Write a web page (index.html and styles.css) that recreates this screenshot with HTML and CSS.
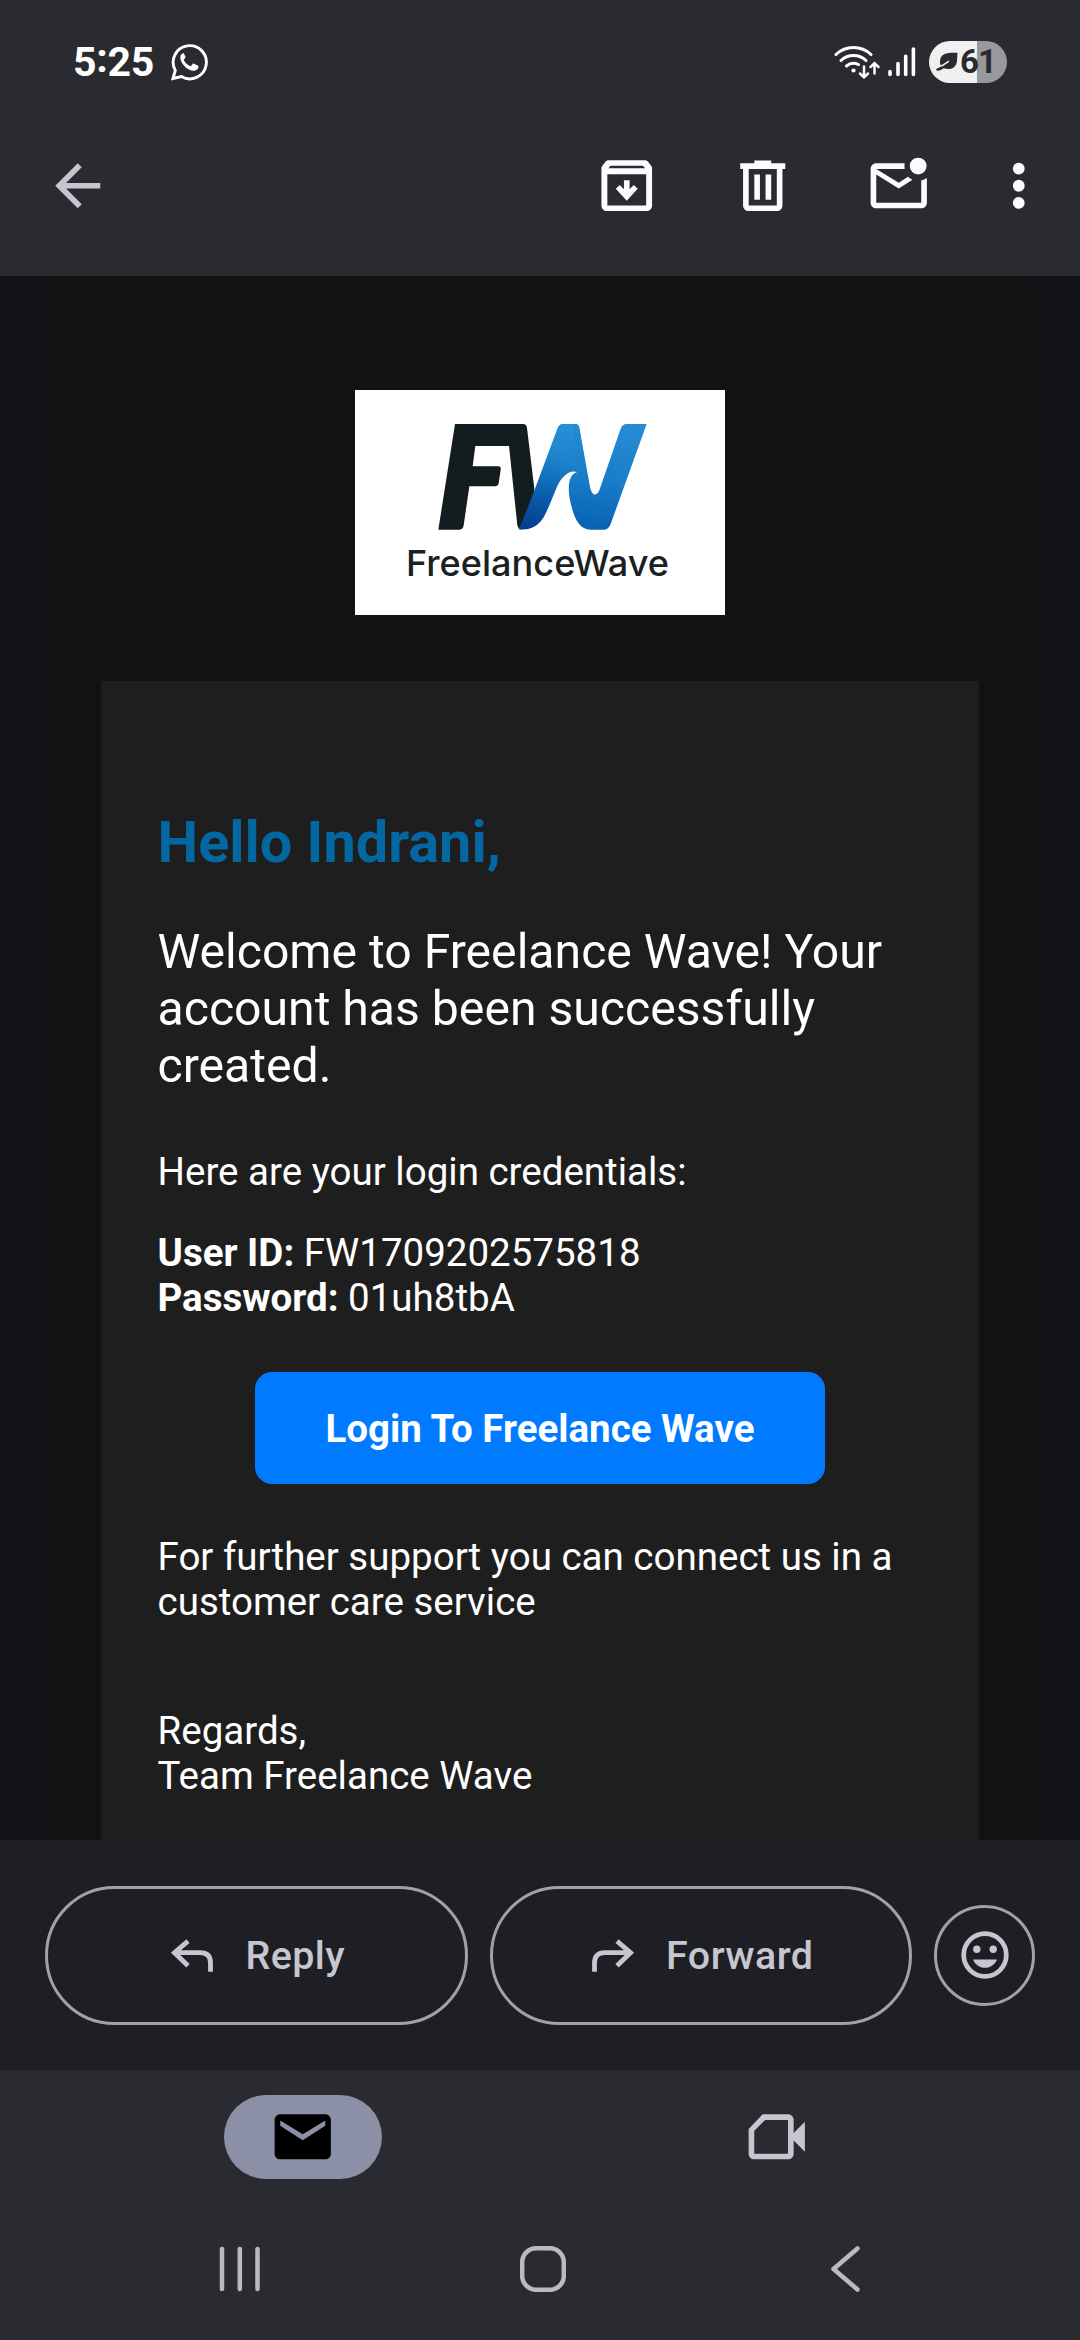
FILE: index.html
```html
<!DOCTYPE html>
<html lang="en">
<head>
<meta charset="utf-8">
<title>Mail</title>
<link rel="stylesheet" href="styles.css">
</head>
<body>
<div class="screen">
  <header class="top">
    <div class="status">
      <div class="status-left">
        <span class="clock">5<span class="colon">:</span>25</span>
        <svg class="whatsapp" viewBox="0 0 37 38"><path d="M2 35.5 4.3 27.4A16.6 16.6 0 1 1 10.4 33.6Z" fill="none" stroke="#fff" stroke-width="2.9" stroke-linejoin="miter"/><path d="M12 10.3c-1.2.2-2.7 1.8-2.7 4.2 0 6 7.300 13.300 13.400 13.300 2.300 0 4.800-1.600 4.800-4 0-.6-.2-.9-.7-1.200l-3.800-1.900c-.6-.3-1-.2-1.400.3l-1.400 1.800c-.4.400-.8.500-1.300.200-2.500-1.200-4.500-3-5.900-5.500-.3-.5-.2-.9.200-1.300l1.100-1.400c.3-.4.300-.800.100-1.200l-1.500-3.200c-.2-.3-.5-.2-.9-.1z" fill="#fff"/></svg>
      </div>
      <div class="status-right">
        <svg class="wifi" viewBox="0 0 46 36" fill="none" stroke="#fff" stroke-linecap="round"><path d="M2 10.500a25.500 25.500 0 0 1 35 0M7 16.500a18 18 0 0 1 25 0M12.500 22a11 11 0 0 1 12-1.500" stroke-width="3"/><circle cx="19.500" cy="26.500" r="2.100" fill="#fff" stroke="none"/><path d="M30 22.500v10.500M26 29.500l4 3.800 4-3.800M40.500 29.500v-9.500M36.500 23l4-3.800 4 3.800" stroke-width="2.500"/></svg>
        <svg class="signal" viewBox="0 0 28 30" stroke="#fff" stroke-width="3.600" stroke-linecap="round"><path d="M2 24.500v3M10 16.500v11M17.700 9.200v18.300M25.400 2v25.500"/></svg>
        <div class="battery"><svg class="leaf" viewBox="0 0 22 20"><path d="M21.500.8C12 .5 4.500 1 4 9c0 2 .2 3.500 1 5C3.500 15.500 2 16.200.5 16.700c-.6.800 0 2 1 2 2.500-.2 4.500-1.200 6-2.500 8 2.500 13-1 13.500-7.500z" fill="#2a2b30"/><path d="M5 14c2.500-.5 5-3 7.500-4.700" stroke="#f0f0f0" stroke-width="1.500" fill="none" stroke-linecap="round"/></svg><span>61</span></div>
      </div>
    </div>
    <div class="toolbar">
      <svg class="ic back" viewBox="0 0 24 24"><path d="M20 11H7.830l5.590-5.590L12 4l-8 8 8 8 1.410-1.410L7.830 13H20z"/></svg>
      <div class="actions">
        <svg class="ic" viewBox="0 0 24 24"><path fill-rule="evenodd" d="M5.500 2.900h13c.4 0 .8.200 1 .5l1.100 1.400c.3.300.4.700.4 1.100V19c0 1.100-.9 2-2 2H5c-1.100 0-2-.9-2-2V5.900c0-.4.100-.8.400-1.100l1.100-1.400c.2-.3.600-.5 1-.5zM6.200 4.900l-.7.900h13l-.7-.9zM5.100 7.900V19h13.800V7.900z"/><path d="M11 10h2v3.200l1.500-1.500 1.400 1.400-3.900 4.200-3.900-4.200 1.400-1.400L11 13.200z"/></svg>
        <svg class="ic" viewBox="0 0 24 24"><path fill-rule="evenodd" d="M9 3h6v1h5v2h-1v13c0 1.100-.9 2-2 2H7c-1.100 0-2-.9-2-2V6H4V4h5zM7 6v13h10V6zm2 2h2v9H9zm4 0h2v9h-2z"/></svg>
        <svg class="ic" viewBox="0 0 24 24"><circle cx="18.900" cy="5" r="3"/><path d="M14.100 4H4c-1.100 0-2 .9-2 2v12c0 1.100.9 2 2 2h16c1.100 0 2-.9 2-2V9.200c-.6.400-1.300.7-2 .8v8H4V8l8 5 4.900-3.100c-.6-.3-1.100-.7-1.600-1.100L12 10.900 4 6h10.100c-.1-.7-.1-1.300 0-2z"/></svg>
        <svg class="ic more" viewBox="0 0 24 24"><circle cx="12" cy="5.900" r="2.100"/><circle cx="12" cy="12" r="2.100"/><circle cx="12" cy="18.100" r="2.100"/></svg>
      </div>
    </div>
  </header>

  <main class="mail">
    <div class="mail-body">
      <svg class="logo" viewBox="45 60 1110 675">
        <defs>
          <linearGradient id="sea" x1="0.350" y1="0" x2="0.200" y2="1"><stop offset="0" stop-color="#258fd8"/><stop offset=".3" stop-color="#1d82cc"/><stop offset=".65" stop-color="#0a5fae"/><stop offset="1" stop-color="#033e8b"/></linearGradient>
          <linearGradient id="crest" x1="0.500" y1="0" x2="0.400" y2="1"><stop offset="0" stop-color="#258cd3"/><stop offset=".5" stop-color="#1a7ec9"/><stop offset="1" stop-color="#0863b2"/></linearGradient>
        </defs>
        <path fill="#fff" d="M45 60h1110v675H45z"/>
        <path fill="#131d1f" d="M345 162H549Q560 162 561 174L583 356L580 400L537 478L532 466L507 228H406L398 289H474Q484 289 482 299L476 340Q474 349 465 349H388L371 466Q369 479 358 479H295Z"/>
        <path fill="url(#sea)" d="M667 162H706Q716 162 718 173L740 310L712 306C690 298 665 318 651 350C634 390 622 425 608 446C592 470 570 479 537 479L580 370L652 176Q657 162 667 162Z"/>
        <path fill="url(#crest)" d="M700 162H706Q716 162 718 173L750 350C756 380 772 380 779 358L842 176Q847 162 860 162H920L812 462Q806 479 792 479H752C716 479 700 440 690 390C682 350 686 312 712 306Z"/>
        <text x="198" y="618" textLength="789" lengthAdjust="spacingAndGlyphs" class="logo-name">FreelanceWave</text>
      </svg>
      <section class="card">
        <h1>Hello Indrani,</h1>
        <p class="lead">Welcome to Freelance Wave! Your account has been successfully created.</p>
        <p class="intro">Here are your login credentials:</p>
        <p class="creds"><b>User ID:</b> FW1709202575818<br><b>Password:</b> 01uh8tbA</p>
        <a class="login">Login To Freelance Wave</a>
        <p class="support">For further support you can connect us in a customer care service</p>
        <p class="sign">Regards,<br>Team Freelance Wave</p>
      </section>
    </div>
  </main>

  <div class="replybar">
    <div class="btn"><svg viewBox="0 0 42 33"><path d="M17 2.500 3.500 14 17 27M4 14H29Q39.500 14 39.500 24V33" transform="translate(0 -.3)"/></svg><span class="reply-label">Reply</span></div>
    <div class="btn"><svg viewBox="0 0 42 33"><path d="M25 2.500 38.500 14 25 27M38 14H13Q2.500 14 2.500 24V33" transform="translate(0 -.3)"/></svg><span class="forward-label">Forward</span></div>
    <div class="emoji"><svg viewBox="0 0 48 48"><circle cx="24" cy="24" r="21.300" fill="none" stroke="#c7c6d0" stroke-width="4.700"/><circle cx="15.800" cy="18.300" r="3.700"/><circle cx="32.200" cy="18.300" r="3.700"/><path d="M12 28.500h24c-2 5-6.500 8.300-12 8.300s-10-3.300-12-8.300z"/></svg></div>
  </div>

  <nav class="tabs">
    <div class="tab"><span class="pill"><svg class="ic" viewBox="0 0 24 24"><path fill-rule="evenodd" fill="#000" d="M4 4h16c1.100 0 2 .9 2 2v12c0 1.100-.9 2-2 2H4c-1.100 0-2-.9-2-2V6c0-1.100.9-2 2-2zM4 6.200v1.900l8 5.100 8-5.100V6.200l-8 4.900z"/></svg></span></div>
    <div class="tab"><svg class="ic meet" viewBox="0 0 24 24"><path fill-rule="evenodd" d="M7 4h9c1.100 0 2 .9 2 2v4.700l4-4v10.600l-4-4V18c0 1.100-.9 2-2 2H4c-1.100 0-2-.9-2-2V9.200zM7.900 6 4 9.900V18h12V6z"/></svg></div>
  </nav>
  <div class="sysnav">
    <svg viewBox="0 0 46 46"><path d="M5 3v40M22.800 3v40M40.500 3v40"/></svg>
    <svg viewBox="0 0 46 46"><rect x="2.200" y="2.200" width="41.600" height="41.600" rx="14"/></svg>
    <svg viewBox="0 0 46 46"><path d="M35.500 2.500 11.500 23l24 20.500"/></svg>
  </div>
</div>
</body>
</html>
```
FILE: styles.css
```css
* { box-sizing: border-box; }
body { margin: 0; background: #2a2b30; font-family: Roboto, sans-serif; color: #fff; }
.screen { width: 1080px; height: 2340px; display: flex; flex-direction: column; overflow: hidden; }
svg { display: block; flex: none; }

.top { height: 276px; background: #2a2b30; }
.status { height: 124px; padding: 0 73px 0 73px; display: flex; justify-content: space-between; align-items: center; }
.status-left, .status-right { display: flex; align-items: center; }
.clock { font: 700 41px/48px Roboto, sans-serif; letter-spacing: -.3px; width: 98px; white-space: nowrap; }
.colon { vertical-align: 4px; line-height: 0; }
.whatsapp { width: 37px; height: 38px; }
.wifi { width: 46px; height: 36px; margin-right: 8px; }
.signal { width: 28px; height: 30px; margin-right: 13px; }
.battery { width: 78px; height: 42px; border-radius: 21px; background: linear-gradient(90deg, #f0f0f0 47.500px, #98999b 47.500px); display: flex; align-items: center; padding-left: 7px; color: #2a2b30; }
.battery span { font: 700 33px/42px Roboto, sans-serif; letter-spacing: -1px; margin-left: 2px; }
.leaf { width: 22px; height: 20px; }

.ic { width: 67.500px; height: 67.500px; fill: #fdfbff; }
.toolbar { height: 124px; padding: 0 28px 0 44px; display: flex; justify-content: space-between; align-items: center; }
.back { fill: #c7c6d0; }
.actions { display: flex; align-items: center; gap: 68.500px; }
.more { margin-left: -16px; }

.mail { height: 1564px; background: #111218; padding: 0 45px; overflow: hidden; }
.mail-body { height: 1564px; background: #121212; padding: 114px 56px 0; }
.logo { width: 370px; height: 225px; margin: 0 auto 66px; }
.logo-name { font: 500 107px Inter, sans-serif; fill: #1a2123; }
.card { height: 1159px; background: #1e1e1e; padding: 129px 56.500px 0; font-size: 38.500px; line-height: 45px; }
h1 { margin: 0 0 47px; font-size: 57.600px; line-height: 66px; font-weight: 700; color: #0367a1; }
p { margin: 0; }
.lead { font-size: 48.150px; line-height: 57px; margin-bottom: 55px; }
.intro { margin-bottom: 36px; }
.creds { margin-bottom: 52px; }
.login { display: flex; align-items: center; justify-content: center; width: 570px; height: 112px; margin: 0 auto 50px; border-radius: 17px; background: #007bff; font-weight: 700; }
.support { margin-bottom: 84px; }

.replybar { height: 230px; background: #1e1f25; padding: 0 45px; display: flex; align-items: center; gap: 22px; }
.btn { flex: 1; height: 139px; padding-left: 4px; border: 3px solid #a1a1aa; border-radius: 70px; display: flex; align-items: center; justify-content: center; gap: 32px; font-size: 39.400px; font-weight: 500; letter-spacing: .45px; color: #c7c6d0; }
.btn svg { width: 42px; height: 33px; fill: none; stroke: #c7c6d0; stroke-width: 4.800; }
.emoji { width: 101px; height: 101px; flex: none; border: 3px solid #a1a1aa; border-radius: 50%; display: flex; align-items: center; justify-content: center; }
.emoji svg { width: 48px; height: 48px; fill: #c7c6d0; }

.tabs { height: 134px; background: #2a2b30; display: flex; padding: 0 66px; }
.tab { flex: 1; display: flex; align-items: center; justify-content: center; }
.pill { width: 158px; height: 84px; border-radius: 42px; background: #8b90a6; display: flex; align-items: center; justify-content: center; }
.meet { fill: #c7c6d0; }
.sysnav { height: 136px; background: #2a2b30; display: flex; justify-content: space-between; align-items: center; padding: 0 212px 6px 217px; }
.sysnav svg { width: 46px; height: 46px; fill: none; stroke: #bbb; stroke-width: 4.500; stroke-linecap: round; stroke-linejoin: round; }
```
